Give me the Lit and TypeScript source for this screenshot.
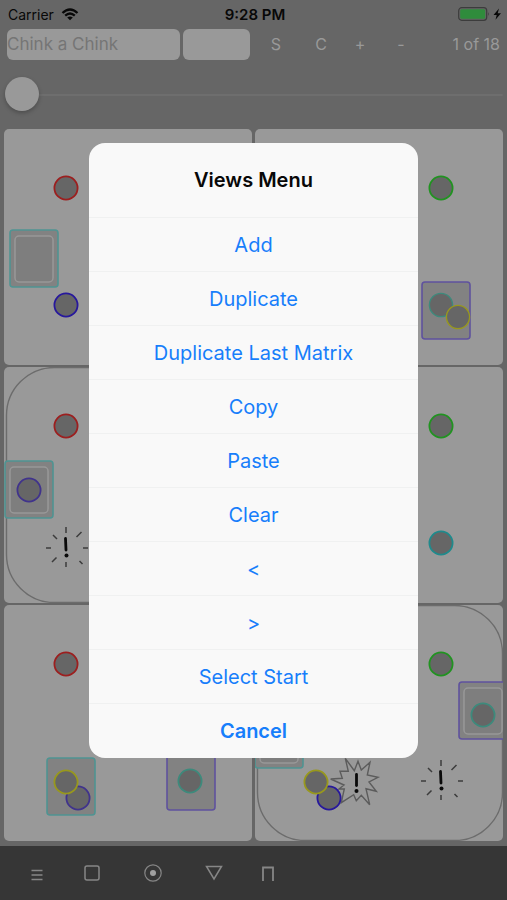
import { LitElement, html, css, svg } from "lit";
import { customElement, property } from "lit/decorators.js";

type Shape = ReturnType<typeof svg>;

const ring = (x: number, y: number, tone: string) =>
  svg`<circle class="ring ${tone}" cx=${x} cy=${y} r="11.600" />`;

const card = (x: number, y: number, tone: string, framed = false) => svg`
  <rect class="card ${tone}" x=${x} y=${y} width="48" height="57" rx="3" />
  ${framed ? svg`<rect class="frame" x=${x + 5} y=${y + 6} width="38" height="46" rx="4" />` : ""}`;

const stage = () =>
  svg`<rect class="outline" x="2.5" y="0.5" width="245" height="235" rx="48" />`;

/* Exclamation mark with short rays around it. */
const alarm = (x: number, y: number) => svg`
  <g transform="translate(${x} ${y})">
    <path class="ray" d="M0 -20v6M0 15v5M-20 1h5M17 1h5M10.500 -10l5 -5M-13 -12l4 4M-14 15l4.500 -4.500M13.500 14l3 3" />
    <path class="mark" d="M-0.500 -8.500L0 3" />
    <circle class="dot" cx="0.500" cy="8.500" r="2" />
  </g>`;

const burst = () => svg`
  <path class="outline burst" d="M90.300 153.300L99.300 165.700L103 156.300L106.300 165L115 157.300L112.300 170L123 172.300L114 177L121.300 186.300L111 183.700L114.700 199.700L106.300 190.300L101.300 195.700L98.700 189.700L86.300 197.700L89.300 184L84 184L89 180L75.700 174L87.300 173.300L85 166.300L93.300 166.300Z" />
  <path class="mark" d="M101.500 169.500v11" />
  <circle class="dot" cx="101.500" cy="186" r="2" />`;

const panels: { name: string; shapes: Shape[] }[] = [
  { name: "View 1", shapes: [ring(62, 59, "red"), ring(62, 176, "blue"), card(6, 101, "teal", true)] },
  {
    name: "View 2",
    shapes: [card(167, 153, "violet"), ring(186, 176, "teal soft"), ring(203, 188, "yellow soft"), ring(186, 59, "green")],
  },
  {
    name: "View 3",
    shapes: [stage(), ring(62, 59, "red"), card(1, 94, "teal", true), ring(25, 123, "violet"), alarm(62, 180)],
  },
  { name: "View 4", shapes: [ring(186, 59, "green"), ring(186, 176, "cyan")] },
  {
    name: "View 5",
    shapes: [
      ring(62, 59, "red"),
      card(43, 153, "teal"),
      ring(74, 193, "violet"),
      ring(62, 177, "yellow"),
      card(163, 148, "violet"),
      ring(186, 176, "teal"),
    ],
  },
  {
    name: "View 6",
    shapes: [
      stage(),
      ring(186, 59, "green"),
      card(204, 77, "violet", true),
      ring(228, 110, "teal"),
      card(0, 106, "teal", true),
      burst(),
      ring(74, 193, "blue"),
      ring(61, 177, "yellow"),
      alarm(186, 175),
    ],
  },
];

@customElement("view-grid")
export class ViewGrid extends LitElement {
  static styles = css`
    :host {
      display: grid;
      grid-template-columns: 1fr 1fr;
      gap: 2px 3px;
      padding: 0 4px 5px;
    }
    .panel {
      display: block;
      width: 100%;
      height: auto;
      background: #999;
      border-radius: 5px;
    }
    .ring { fill: #666; stroke-width: 1.8; }
    .card { fill: #828282; stroke-width: 1.6; }
    .frame { fill: #7e7e7e; stroke: #989898; stroke-width: 1.5; }
    .red { stroke: #9c1f1f; }
    .blue { stroke: #27189c; }
    .green { stroke: #219321; }
    .cyan { stroke: #1f8a8c; }
    .teal { stroke: #4f9492; }
    .violet { stroke: #5f529e; }
    .yellow { stroke: #98981d; }
    .ring.teal { stroke: #3d8a7c; }
    .ring.violet { stroke: #40338c; }
    .ring.soft { stroke-width: 1.4; }
    .outline { fill: none; stroke: #6c6c6c; stroke-width: 1.4; }
    .burst { stroke: #5c5c5c; }
    .ray { fill: none; stroke: #3c3c3c; stroke-width: 1.5; }
    .mark { fill: none; stroke: #0a0a0a; stroke-width: 2.8; stroke-linecap: round; }
    .dot { fill: #0a0a0a; }
  `;

  render() {
    return panels.map(
      (p) => html`<svg class="panel" viewBox="0 0 248 236" role="img" aria-label=${p.name}>${p.shapes}</svg>`
    );
  }
}

@customElement("action-menu")
export class ActionMenu extends LitElement {
  @property() heading = "";
  @property({ attribute: false }) actions: string[] = [];

  static styles = css`
    :host {
      display: block;
      width: 65%;
      border-radius: 16px;
      overflow: hidden;
      background: #f9f9f9;
    }
    .title {
      margin: 0;
      height: 74px;
      display: grid;
      place-items: center;
      font-size: 20px;
      font-weight: 600;
      color: #080808;
    }
    .action {
      display: block;
      width: 100%;
      height: 54px;
      padding: 0;
      border: 0;
      border-top: 1px solid #f0f1f1;
      background: none;
      font: inherit;
      font-size: 20px;
      color: #177efb;
    }
    .cancel {
      height: 55px;
      font-weight: 600;
    }
  `;

  render() {
    return html`
      <h2 class="title">${this.heading}</h2>
      ${this.actions.map((a) => html`<button class="action">${a}</button>`)}
      <button class="action cancel">Cancel</button>
    `;
  }
}

@customElement("app-root")
export class AppRoot extends LitElement {
  private actions = ["Add", "Duplicate", "Duplicate Last Matrix", "Copy", "Paste", "Clear", "<", ">", "Select Start"];

  static styles = css`
    :host {
      position: relative;
      display: flex;
      flex-direction: column;
      min-height: 100vh;
      background: #666;
      font-family: Inter, "Liberation Sans", sans-serif;
    }
    button {
      padding: 0;
      border: 0;
      background: none;
      font: inherit;
      color: inherit;
    }
    .status {
      display: grid;
      grid-template-columns: 1fr auto 1fr;
      align-items: center;
      height: 28px;
      padding: 0 5px 0 8px;
      font-size: 14px;
      color: #080808;
    }
    .carrier { display: flex; align-items: center; gap: 7px; }
    .time { font-size: 15px; font-weight: 600; }
    .power { justify-self: end; display: block; }
    .toolbar {
      display: grid;
      grid-template-columns:
        minmax(0, 173fr) minmax(0, 67fr) minmax(0, 46fr) minmax(0, 38fr)
        minmax(0, 34fr) minmax(0, 42fr) minmax(0, 75fr);
      gap: 3px;
      height: 32px;
      padding: 0 7px;
      font-size: 16px;
      color: #999;
      align-items: center;
    }
    .field {
      box-sizing: border-box;
      width: 100%;
      height: 31px;
      padding: 0;
      border: 0;
      border-radius: 6px;
      background: #999;
      font: inherit;
      font-size: 17px;
      color: #757575;
    }
    .count { text-align: right; white-space: nowrap; }
    .scrub {
      display: block;
      height: 69px;
      padding: 0 4px 0 5px;
    }
    .slider {
      appearance: none;
      display: block;
      width: 100%;
      height: 69px;
      margin: 0;
      background: none;
    }
    .slider::-webkit-slider-runnable-track {
      height: 2px;
      border-radius: 1px;
      background: #6e6e6e;
    }
    .slider::-webkit-slider-thumb {
      appearance: none;
      width: 34px;
      height: 34px;
      margin-top: -17px;
      border-radius: 50%;
      background: #999;
      box-shadow: 0 2px 4px rgba(0, 0, 0, 0.25);
    }
    .tabs {
      flex: 1;
      display: flex;
      align-items: center;
      min-height: 54px;
      padding-left: 13px;
      background: #363636;
    }
    .tab { display: grid; place-items: center; width: 61px; height: 54px; }
    .tab:first-child, .tab:last-child { width: 48px; }
    .glyph { fill: none; stroke: #868686; stroke-width: 1.5; display: block; }
    .core { fill: #a0a0a0; stroke: none; }
    .overlay {
      position: absolute;
      inset: 0;
      display: grid;
      place-items: center;
      padding-top: 1px;
    }
  `;

  render() {
    return html`
      <header class="status">
        <span class="carrier">Carrier
          <svg width="18" height="13" viewBox="0 0 18 13" aria-hidden="true">
            <path d="M1.500 5Q9 -2 16.500 5M4.200 7.700Q9 3.300 13.800 7.700" fill="none" stroke="#080808" stroke-width="2.300" />
            <path d="M9 12.300L6.200 9.500Q9 7.300 11.800 9.500Z" fill="#080808" />
          </svg>
        </span>
        <span class="time">9:28 PM</span>
        <svg class="power" width="44" height="14" viewBox="0 0 44 14" aria-hidden="true">
          <rect x="0.700" y="0.700" width="28" height="12.600" rx="3" fill="none" stroke="#3c3c3c" stroke-width="1.200" />
          <rect x="2.200" y="2.200" width="25" height="9.600" rx="1.500" fill="#2f8c3c" />
          <path d="M30 5q1.600 2 0 4z" fill="#3c3c3c" />
          <path d="M41 1.500L35.500 8h3.200L37.500 12.800L43 6.200h-3.300z" fill="#080808" />
        </svg>
      </header>
      <div class="toolbar">
        <input class="field" aria-label="Name" value="Chink a Chink" />
        <input class="field" aria-label="Value" />
        <button>S</button>
        <button>C</button>
        <button>+</button>
        <button>-</button>
        <span class="count">1 of 18</span>
      </div>
      <label class="scrub"><input class="slider" type="range" min="1" max="18" value="1" aria-label="View" /></label>
      <view-grid></view-grid>
      <nav class="tabs">
        <button class="tab" aria-label="Menu">
          <svg class="glyph" width="12" height="16" viewBox="0 0 12 16"><path d="M0.500 5.500h11M0.500 10h11M0.500 14.500h11" /></svg>
        </button>
        <button class="tab" aria-label="Square">
          <svg class="glyph" width="16" height="16" viewBox="0 0 16 16"><rect x="1" y="1" width="14" height="14" rx="2" /></svg>
        </button>
        <button class="tab" aria-label="Circle">
          <svg class="glyph" width="18" height="18" viewBox="0 0 18 18"><circle cx="9" cy="9" r="8.200" stroke-width="1.200" /><circle class="core" cx="9" cy="9" r="3" /></svg>
        </button>
        <button class="tab" aria-label="Triangle">
          <svg class="glyph" width="18" height="16" viewBox="0 0 18 16"><path d="M1.500 1.500h15L9 14z" /></svg>
        </button>
        <button class="tab" aria-label="Gate">
          <svg class="glyph" width="14" height="16" viewBox="0 0 14 16"><path d="M2 16V2.500h10V16" stroke-width="1.800" /></svg>
        </button>
      </nav>
      <div class="overlay">
        <action-menu role="dialog" aria-label="Views Menu" heading="Views Menu" .actions=${this.actions}></action-menu>
      </div>
    `;
  }
}
